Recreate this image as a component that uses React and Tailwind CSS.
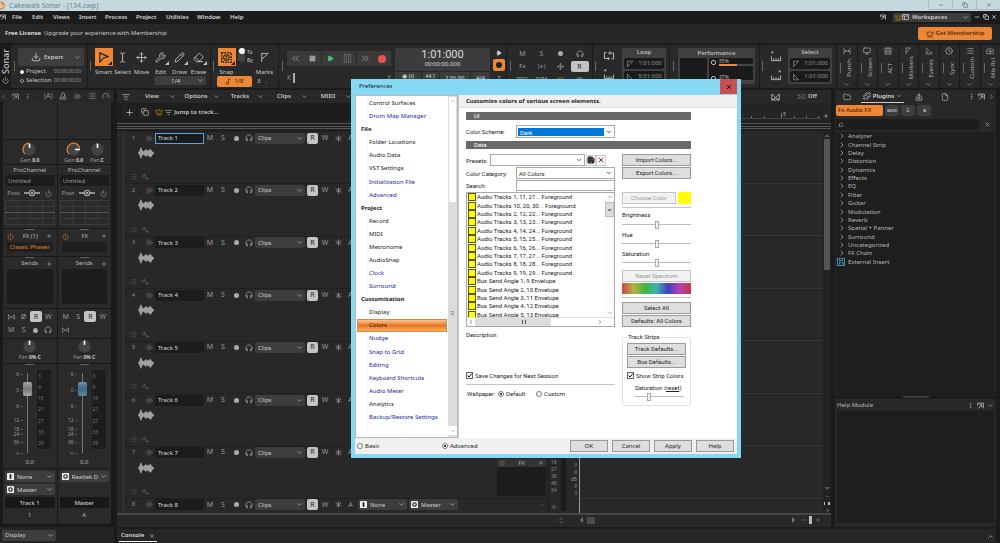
import React from 'react';
import {
  Camera, ChevronDown, ChevronLeft, ChevronRight, ChevronUp, ChevronsLeft, ChevronsRight,
  Clock, Copy, Crown, Download, Eraser, EllipsisVertical, File, Folder, Gauge, List, ListFilter,
  Minus, Monitor, Move, Music2, Pause, Pencil, Play, Plus, Power, Puzzle, Save,
  Search, Square, TextCursor, Wrench, X,
} from 'lucide-react';

const menus = [
  ['File', 'w-[20px]'], ['Edit', 'w-[21px]'], ['Views', 'w-[26px]'], ['Insert', 'w-[26px]'], ['Process', 'w-[31px]'],
  ['Project', 'w-[30px]'], ['Utilities', 'w-[31px]'], ['Window', 'w-[33px]'], ['Help', 'w-[20px]'],
];

const plugins = [
  'Analyzer', 'Channel Strip', 'Delay', 'Distortion', 'Dynamics', 'Effects', 'EQ', 'Filter', 'Guitar',
  'Modulation', 'Reverb', 'Spatial + Panner', 'Surround', 'Uncategorized', 'FX Chain',
];

const prefs = [
  { name: 'Control Surfaces' }, { name: 'Drum Map Manager', blue: true },
  { name: 'File', head: true }, { name: 'Folder Locations' }, { name: 'Audio Data' }, { name: 'VST Settings' },
  { name: 'Initialization File', blue: true }, { name: 'Advanced', blue: true },
  { name: 'Project', head: true }, { name: 'Record' }, { name: 'MIDI' }, { name: 'Metronome' }, { name: 'AudioSnap' },
  { name: 'Clock', blue: true }, { name: 'Surround', blue: true },
  { name: 'Customization', head: true }, { name: 'Display' }, { name: 'Colors', active: true },
  { name: 'Nudge', blue: true }, { name: 'Snap to Grid', blue: true }, { name: 'Editing', blue: true },
  { name: 'Keyboard Shortcuts', blue: true }, { name: 'Audio Meter', blue: true }, { name: 'Analytics' },
  { name: 'Backup/Restore Settings', blue: true },
];

const colorRows = [
  'Audio Tracks 1, 11, 21... Foreground', 'Audio Tracks 10, 20, 30... Foreground',
  'Audio Tracks 2, 12, 22... Foreground', 'Audio Tracks 3, 13, 23... Foreground',
  'Audio Tracks 4, 14, 24... Foreground', 'Audio Tracks 5, 15, 25... Foreground',
  'Audio Tracks 6, 16, 26... Foreground', 'Audio Tracks 7, 17, 27... Foreground',
  'Audio Tracks 8, 18, 28... Foreground', 'Audio Tracks 9, 19, 29... Foreground',
  'Bus Send Angle 1, 9 Envelope', 'Bus Send Angle 2, 10 Envelope', 'Bus Send Angle 3, 11 Envelope',
  'Bus Send Angle 4, 12 Envelope', 'Bus Send Angle 5, 13 Envelope',
];

/* ---------- icons ---------- */

const IoIcon = ({ kind }) => (
  <svg viewBox="0 0 12 12" className="ml-[2px] h-[7px] w-[7px] shrink-0">
    <rect width="12" height="12" rx="1" fill="#eee" />
    {kind === 'in' ? <rect x="4.5" y="2" width="3" height="8" fill="#222" /> : <circle cx="6" cy="6" r="3" fill="none" stroke="#222" strokeWidth="2" />}
  </svg>
);

const DockIcon = ({ size = 7, className = '' }) => (
  <svg width={size} height={size} viewBox="0 0 12 12" className={className} fill="none" stroke="currentColor" strokeWidth="1.5">
    <path d="M1 2h10v9M4 5h4v4M8 5 2 11M1 2v4" />
  </svg>
);

const PanelIcon = () => (
  <svg viewBox="0 0 14 12" className="h-[6px] w-[7px]" fill="none" stroke="#ccc" strokeWidth="1.5">
    <path d="M1 1h12v10H1ZM1 4h12M5 4v7" />
  </svg>
);

const Phones = () => (
  <svg viewBox="0 0 14 14" className="h-[8px] w-[8px]" fill="none" stroke="#a6a6a6" strokeWidth="1.3">
    <path d="M4 12.5C1 10 1 6 2.5 4a5.5 5.5 0 0 1 9 0C13 6 13 10 10 12.5V8h2M4 12.5V8H2" />
  </svg>
);

const MetronomeIcon = () => (
  <svg viewBox="0 0 14 14" className="ml-[6px] h-[8px] w-[8px]" fill="none" stroke="currentColor" strokeWidth="1.3">
    <path d="M5.5 1.5h3L12.5 12.5h-11ZM7 10 11 4M3 9.5h8" />
  </svg>
);

const InputIcon = () => (
  <svg viewBox="0 0 14 14" className="h-[7px] w-[7px]" fill="none" stroke="currentColor">
    <path d="M1.5 3v8M4.5 1v12M7.5 1v12M9.5 4 13 7 9.5 10Z" />
  </svg>
);

const CrossIcon = () => (
  <svg viewBox="0 0 14 12" className="h-[6px] w-[7px]" fill="none" stroke="currentColor" strokeWidth="1.3">
    <path d="M1 1v10M13 1v10M1 2l12 8M1 10 13 2" />
  </svg>
);

const StarIcon = () => (
  <svg viewBox="0 0 12 12" className="h-[7px] w-[7px]" fill="none" stroke="currentColor" strokeWidth="1.3">
    <path d="M6 .5v11M1 3l10 6M11 3 1 9" />
  </svg>
);

const SmartIcon = ({ size }) => (
  <svg width={size} height={size} viewBox="0 0 12 12" fill="none" stroke="currentColor" strokeWidth="1.3">
    <path d="M2 1 11 5 6 6.5 2 11Z" />
  </svg>
);

const SnapIcon = ({ size }) => (
  <svg width={size} height={size} viewBox="0 0 14 14" fill="none" stroke="currentColor">
    <rect x="1" y="1" width="12" height="12" strokeWidth="2" strokeDasharray="2 1.3" />
    <circle cx="7" cy="7" r="3.6" strokeWidth="1.3" />
    <path d="M8.5 5.5H6.5Q5.5 6.5 7 7T7.5 8.5H5.5" />
  </svg>
);

const LoopIcon = () => (
  <svg viewBox="0 0 14 12" className="h-[10px] w-[12px]" fill="none" stroke="#bbb" strokeWidth="1.2">
    <path d="M4 2H1.5v7H7M10 9.5h2.500V2.500H7M8.500 .5 6.500 2.500l2 2M5.500 7.500l2 1.500-2 2" />
  </svg>
);

const FlagIcon = ({ flip }) => (
  <svg viewBox="0 0 10 10" className={`h-[8px] w-[8px] shrink-0 ${flip ? '-scale-y-100' : ''}`} fill="none" stroke="#888">
    <path d="M2 9V1.5h6.500L2 8" />
  </svg>
);

const RangeIcon = ({ right }) => (
  <svg viewBox="0 0 12 12" className={`h-[11px] w-[12px] ${right ? '-scale-x-100' : ''}`} fill="none" stroke="#bbb">
    <path d="M1 6v4.500h10V6M3.500 8v2M6 8v2M8.500 8v2" />
    <path d="M1 1.500h2" strokeWidth="2" />
  </svg>
);

const PunchIcon = ({ size }) => (
  <svg width={size} height={size} viewBox="0 0 12 12" fill="none" stroke="currentColor">
    <path d="M1.500 1v10M10.500 1v10M3 6h6M4.500 4.500 3 6l1.500 1.500M7.500 4.500 9 6 7.500 7.500" />
  </svg>
);

const MarkIcon = ({ size }) => (
  <svg width={size} height={size} viewBox="0 0 12 12" fill="none" stroke="currentColor">
    <path d="M3 11V1.500h7L3 8" />
  </svg>
);

const ActIcon = ({ size }) => (
  <svg width={size} height={size} viewBox="0 0 12 12" fill="none" stroke="currentColor">
    <path d="M1.500 1.500h9v9h-9ZM1.500 7.500h9M4.500 1.500v6M7.500 1.500v6" />
  </svg>
);

const EventsIcon = ({ size }) => (
  <svg width={size} height={size} viewBox="0 0 12 12" fill="none" stroke="currentColor">
    <path d="M1 2h3M1 5h5M1 8h4M7 8h4M1 10.500h10" />
  </svg>
);

/* ---------- shared controls ---------- */

const Drop = ({ value, label, className = '', icon }) => (
  <div className={`relative flex items-center rounded-xs bg-[#3d3d3d] text-[#d0d0d0] ${className}`}>
    {icon && <IoIcon kind={icon} />}
    <select aria-label={label} className="min-w-0 flex-1 appearance-none bg-transparent px-[3px] leading-[10px] outline-none">
      <option>{value}</option>
    </select>
    <ChevronDown size={7} className="pointer-events-none absolute right-[2px]" />
  </div>
);

const TextBtn = ({ label, on, className = 'w-[12px]' }) => (
  <button className={`flex h-[11px] shrink-0 items-center justify-center text-[7px] ${on ? 'rounded-xs bg-[#c4c4c4] text-[#2a2a2a]' : 'text-[#999]'} ${className}`}>
    {label}
  </button>
);

const Dot = () => <span className="h-[5px] w-[5px] rounded-full bg-[#aaa]" />;

/* ---------- top bars and toolbar ---------- */

const Module = ({ children, className = '' }) => (
  <section className={`flex shrink-0 rounded-xs bg-[#292929] ${className}`}>{children}</section>
);

const Grip = () => <span className="mt-[16px] h-[10px] w-px shrink-0 bg-[#666]" />;

const Tool = ({ icon: Icon, label, active, corner }) => (
  <button className="flex w-[19px] flex-col items-center gap-[2px]">
    <span className={`relative flex h-[18px] w-[18px] items-center justify-center ${active ? 'bg-[#ee8735] text-[#222]' : 'text-[#c0c0c0]'}`}>
      <Icon size={11} strokeWidth={2} />
      {corner && <i className="absolute right-px bottom-px border-2 border-transparent border-r-current border-b-current" />}
    </span>
    <span className="text-[6px] leading-[8px] text-[#c8c8c8]">{label}</span>
  </button>
);

const TimeField = ({ value, label, flip }) => (
  <label className="flex h-[11px] items-center rounded-xs bg-[#1a1a1a] px-[2px]">
    <FlagIcon flip={flip} />
    <input aria-label={label} defaultValue={value} className="w-full min-w-0 bg-transparent text-right text-[6px] leading-[9px] text-[#999] outline-none" />
  </label>
);

const TimePanel = ({ title, values }) => (
  <div className="mt-[3px] flex h-[36px] w-[44px] flex-col gap-[2px] rounded-xs bg-[#404040] px-[2px]">
    <h3 className="text-center text-[6px] leading-[8px] font-semibold text-[#bbb]">{title}</h3>
    <TimeField value={values[0]} label={`${title} from`} />
    <TimeField value={values[1]} label={`${title} to`} flip />
  </div>
);

const SideModule = ({ icon: Icon, label }) => (
  <section className="flex min-w-0 flex-1 flex-col items-center rounded-xs bg-[#292929] pt-[2px] text-[#b0b0b0]">
    <Icon size={8} />
    <div className="flex h-[26px] items-center gap-[4px]">
      <span className="h-[10px] w-px bg-[#666]" />
      <span className="rotate-180 text-[6px] leading-[8px] [writing-mode:vertical-rl]">{label}</span>
    </div>
    <ChevronDown size={7} />
  </section>
);

const TopBars = () => (
  <>
    <header className="flex h-[11px] shrink-0 items-center bg-[#c6d9de] text-[7px] text-[#71838a]">
      <svg viewBox="0 0 8 10" className="h-[9px] w-[7px]" fill="none" stroke="#e8852f" strokeWidth="1.5">
        <path d="M0 1.5a3.7 3.7 0 1 1 0 7M1 5l3-3" />
      </svg>
      <h1 className="flex-1 pl-[2px] leading-[11px]">Cakewalk Sonar - [134.cwp]</h1>
      {[Minus, Copy, X].map((Icon, i) => (
        <button key={i} aria-label={['Minimize', 'Restore', 'Close'][i]} className="flex h-[9px] w-[24px] items-center justify-center border border-t-0 border-r-0 border-[#a9bbc0] text-[#6c7d83]">
          <Icon size={6} strokeWidth={3} />
        </button>
      ))}
    </header>
    <nav className="flex h-[12px] shrink-0 items-center bg-[#1b1b1b] text-[6px] font-semibold text-[#d6d6d6]">
      <DockIcon size={6} className="mr-[6px]" />
      {menus.map(([name, width]) => (
        <button key={name} className={`h-[9px] shrink-0 text-left leading-[9px] ${width}`}>{name}</button>
      ))}
      <span className="flex-1" />
      <DockIcon size={6} />
      <div className="ml-[7px] flex h-[9px] w-[78px] items-center bg-[#3a3a3a] pl-[2px]">
        <Crown size={7} color="#b98512" />
        <PanelIcon />
        <Drop value="Workspaces" label="Workspaces" className="h-[9px] flex-1" />
      </div>
      <div className="flex w-[29px] items-center justify-between px-[3px]">
        <Minus size={6} strokeWidth={3} /><Copy size={6} strokeWidth={3} /><X size={6} strokeWidth={3} />
      </div>
    </nav>
    <div className="mt-px flex h-[19px] shrink-0 items-center bg-[#272727] pr-[8px] pl-[5px] text-[6px] text-[#c9c9c9]">
      <b className="mr-[3px] font-semibold text-[#eee]">Free License</b>
      <p className="flex-1">Upgrade your experience with Membership</p>
      <button className="flex h-[13px] w-[74px] items-center justify-center gap-[2px] rounded-xs bg-[#ee8735] font-semibold text-[#5b2c0a]">
        <Crown size={8} /> Get Membership
      </button>
    </div>
  </>
);

const Toolbar = () => (
  <div className="mt-[2px] flex h-[43px] shrink-0 gap-px text-[#c8c8c8]">
    <div className="flex w-[10px] shrink-0 flex-col items-center justify-center gap-[2px]">
      <b className="rotate-180 text-[9px] leading-[9px] font-medium [writing-mode:vertical-rl]">Sonar</b>
      <Power size={7} />
    </div>

    <Module className="w-[76px] px-[3px]">
      <Grip />
      <div className="ml-[3px] w-[66px] pt-[3px]">
        <button className="flex h-[18px] w-full items-center rounded-xs bg-[#3d3d3d] px-[3px] pl-[13px] text-[6px] font-semibold">
          <Download size={10} /> <span className="flex-1 pl-[3px] text-left">Export</span> <ChevronDown size={7} />
        </button>
        <div className="mt-px flex flex-col text-[6px] leading-[9px]">
          {[['Project', true], ['Selection', false]].map(([name, on]) => (
            <label key={name} className="flex items-center">
              <input type="radio" name="export" defaultChecked={on} className="mx-[2px] h-[4px] w-[4px] appearance-none rounded-full border border-[#999] checked:border-white checked:bg-white" />
              <span className="flex-1">{name}</span>
              <span className="pr-[3px] text-[5px] text-[#999]">00:00:00:00</span>
            </label>
          ))}
        </div>
      </div>
    </Module>

    <Module className="w-[122px] pl-[2px]">
      <Grip />
      <div className="relative ml-[3px] pt-[3px]">
        <div className="flex">
          <Tool icon={SmartIcon} label="Smart" active corner />
          <Tool icon={TextCursor} label="Select" />
          <Tool icon={Move} label="Move" />
          <Tool icon={Wrench} label="Edit" corner />
          <Tool icon={Pencil} label="Draw" corner />
          <Tool icon={Eraser} label="Erase" corner />
        </div>
        <Drop value="1/4" label="Draw resolution" className="ml-[60px] h-[9px] w-[52px] pl-[14px] text-[6px]" />
      </div>
    </Module>

    <Module className="w-[67px] pl-[2px]">
      <Grip />
      <div className="ml-[3px] pt-[3px]">
        <div className="flex">
          <Tool icon={SnapIcon} label="Snap" active corner />
          <button role="switch" aria-checked="true" aria-label="Snap to" className="ml-[2px] h-[14px] w-[7px] rounded-full bg-[#444] pb-[8px]">
            <span className="mx-auto block h-[6px] w-[6px] rounded-full bg-white" />
          </button>
          <div className="ml-[2px] flex w-[8px] flex-col text-[5px] leading-[8px]"><span>To</span><span>By</span></div>
          <Tool icon={MarkIcon} label="Marks" />
        </div>
        <div className="flex items-center gap-[5px] text-[6px]">
          <button className="flex h-[11px] w-[35px] items-center justify-center gap-[2px] rounded-xs bg-[#ee8735] text-[#3a1e08]">
            <Music2 size={7} /> 1/8
          </button>
          <span className="leading-[9px]">3</span><span className="leading-[9px]">.</span>
        </div>
      </div>
    </Module>

    <Module className="w-[227px] pl-[3px]">
      <Grip />
      <div className="ml-[4px] w-[104px] pt-[6px]">
        <div className="flex h-[15px] justify-between">
          {[ChevronsLeft, Square, Play, Pause, ChevronsRight].map((Icon, i) => (
            <button key={i} aria-label={['Rewind', 'Stop', 'Play', 'Pause', 'Forward'][i]} className={`flex w-[17px] items-center justify-center bg-[#3a3a3a] ${i === 2 ? 'text-[#4cc777]' : 'text-[#999]'}`}>
              <Icon size={i === 1 || i === 2 ? 7 : 11} strokeWidth={i === 3 ? 1 : 2} fill={i === 1 || i === 2 ? 'currentColor' : 'none'} />
            </button>
          ))}
          <button aria-label="Record" className="flex w-[17px] items-center justify-center bg-[#3a3a3a]">
            <span className="h-[8px] w-[8px] rounded-full bg-[#ef5350]" />
          </button>
        </div>
        <div className="mt-[7px] flex items-center gap-[2px] text-[#888]">
          <span className="text-[7px] leading-[8px]">K</span>
          <input type="range" aria-label="Position" defaultValue="0" className="h-[10px] min-w-0 flex-1 appearance-none bg-linear-to-b from-transparent from-45% via-[#666] via-50% to-transparent to-55% [&::-webkit-slider-thumb]:h-[10px] [&::-webkit-slider-thumb]:w-[2px] [&::-webkit-slider-thumb]:appearance-none [&::-webkit-slider-thumb]:bg-[#aaa]" />
          <span className="text-[7px] leading-[8px]">X</span>
        </div>
      </div>
      <div className="mt-[3px] ml-[4px] w-[95px] overflow-hidden rounded-xs bg-[#3c3c3c] text-center text-[#ddd]">
        <div className="font-['Roboto'] text-[11px] leading-[13px]">1:01:000</div>
        <div className="text-[6px] leading-[7px]">00:00:00.000</div>
        <div className="mt-[3px] flex h-[17px] gap-px bg-[#292929] pt-px text-[6px] leading-[8px] [&>span]:bg-[#3c3c3c]">
          <span className="w-[26px]">◉ (i)</span><span className="w-[17px] text-[5px]">44.1</span><span className="flex-1 pt-[2px]">120.00</span><span className="w-[19px] pt-[2px]">4/4</span>
        </div>
      </div>
      <div className="ml-[3px] flex w-[12px] flex-col items-center gap-[3px] pt-[5px]">
        <Play size={6} fill="#ccc" />
        <button aria-label="Audio engine" className="flex h-[12px] w-[12px] items-center justify-center rounded-xs bg-[#ee8735]">
          <span className="h-[6px] w-[6px] rounded-full bg-[#222]" />
        </button>
        <span className="text-[6px]">?</span>
      </div>
    </Module>

    <Module className="w-[85px] pl-[3px]">
      <Grip />
      <div className="ml-[2px] grid h-[40px] w-[76px] grid-cols-4 items-center justify-items-center pt-[2px] text-[6px] leading-[9px] text-[#aaa]">
        <TextBtn label="M" /><TextBtn label="S" /><Dot /><Phones />
        <span>Fx</span><span>|s|</span><Move size={7} /><TextBtn label="R" on className="w-[18px]" />
        <span>PDC</span><span>DIM</span><Crown size={7} color="#b98512" /><span>W</span>
      </div>
    </Module>

    <Module className="w-[76px] pl-[2px]">
      <Grip />
      <div className="flex w-[26px] flex-col items-center gap-[8px] pt-[6px]">
        <LoopIcon /><RangeIcon />
      </div>
      <TimePanel title="Loop" values={['1:01:000', '5:01:000']} />
    </Module>

    <Module className="w-[89px] pl-[3px]">
      <Grip />
      <div className="mt-[3px] ml-[4px] h-[36px] w-[77px] rounded-xs bg-[#404040] px-[2px] text-[6px] text-[#bbb]">
        <h3 className="text-center leading-[10px] font-semibold">Performance</h3>
        <div className="flex h-[24px] gap-[2px]">
          <span className="w-[27px] bg-[#1a1a1a]" />
          <div className="flex flex-1 flex-col justify-between bg-[#1a1a1a] pl-[2px] text-[5px] leading-[6px]">
            {[['55%', 'w-[18px]'], ['37%', 'w-[12px]']].map(([n, w]) => (
              <div key={n} className="flex items-center gap-[3px]">
                <i className="h-[5px] w-[5px] rounded-xs border border-[#bbb]" />
                <div className="flex-1">{n}<span className="block h-[2px] bg-[#444]"><i className={`block h-[2px] bg-[#ee8735] ${w}`} /></span></div>
              </div>
            ))}
          </div>
        </div>
      </div>
    </Module>

    <Module className="w-[76px] pl-[2px]">
      <Grip />
      <div className="flex w-[25px] flex-col items-center gap-[8px] pt-[6px]">
        <RangeIcon /><RangeIcon right />
      </div>
      <TimePanel title="Select" values={['1:01:000', '1:01:000']} />
    </Module>

    <div className="flex flex-1 gap-px">
      <SideModule icon={PunchIcon} label="Punch" />
      <SideModule icon={Monitor} label="Screen" />
      <SideModule icon={ActIcon} label="ACT" />
      <SideModule icon={MarkIcon} label="Markers" />
      <SideModule icon={EventsIcon} label="Events" />
      <SideModule icon={Clock} label="Sync" />
      <SideModule icon={List} label="Custom" />
      <SideModule icon={Camera} label="Mix Rcl" />
    </div>
  </div>
);

/* ---------- channel strips ---------- */

const Knob = ({ name, value, arc, side }) => (
  <div className="flex flex-col items-center">
    <svg viewBox="0 0 28 28" className="h-[15px] w-[15px]" fill="none">
      <circle cx="14" cy="14" r="11.5" fill="#444" />
      {arc && <path d={side ? 'M6 23A12 12 0 1 1 26 12' : 'M6 23A12 12 0 0 1 14 2'} stroke="#e07f35" strokeWidth="2.5" />}
      <path d={side ? 'M17 14h9' : 'M14 11V3'} stroke="#fff" strokeWidth="3" />
    </svg>
    <span className="text-[5px] leading-[6px] whitespace-nowrap text-[#999]">{name} <b className="text-[#ccc]">{value}</b></span>
  </div>
);

const meter = ['3', '9', '15', '21', '27', '33', '39'];
const scale = [['6', 'h-[16px]'], ['0', 'h-[16px]'], ['6', 'h-[14px]'], ['12', 'h-[9px]'], ['18', 'h-[5px]'], ['24', 'h-[8px]'], ['36', 'h-[11px]'], ['∞', 'h-[5px]']];

const Strip = ({ master }) => (
  <section className="flex min-w-0 flex-1 flex-col gap-px text-[6px] text-[#b8b8b8] [&>*]:shrink-0 [&>*]:bg-[#2a2a2a]">
    <div className="h-[37px]" />
    <div className="flex h-[24px] items-center justify-evenly">
      <Knob name="Gain" value="0.0" arc side={master} />
      {master && <Knob name="Pan" value="C" />}
    </div>
    <div className="flex h-[63px] flex-col px-[2px]">
      <h3 className="text-center leading-[10px]">ProChannel</h3>
      <input aria-label="ProChannel preset" defaultValue="Untitled" className="h-[11px] w-full bg-[#1c1c1c] px-[3px] text-[#999] outline-none" />
      <div className="flex h-[14px] items-center justify-around text-[#999]">
        Post
        <svg viewBox="0 0 30 14" className="h-[8px] w-[16px]" fill="none" stroke="#aaa" strokeWidth="3">
          <path d="M0 7h30" /><circle cx="15" cy="7" r="5" fill="#2a2a2a" strokeWidth="2" /><circle cx="15" cy="7" r="1" />
        </svg>
        <Power size={7} />
      </div>
      <svg viewBox="0 0 48 25" className="h-[25px] w-full" preserveAspectRatio="none" fill="none" stroke="#3b3b3b">
        <rect x=".5" y=".5" width="47" height="24" /><path d="M12.5 0v25M24.5 0v25M36.5 0v25M0 6.5h48M0 18.5h48" /><path d="M0 12.5h48" stroke="#555" />
      </svg>
    </div>
    <div className="flex h-[27px] flex-col px-[4px]">
      <span className="mx-auto h-px w-[9px] bg-[#666]" />
      <div className="flex h-[12px] items-center justify-between">
        <Power size={7} color="#d97a34" /> {master ? 'FX' : 'FX (1)'} <Plus size={6} />
      </div>
      <button className="h-[10px] rounded-xs bg-[#1f1f1f] text-[#e08438]">{master ? '' : 'Classic Phaser'}</button>
    </div>
    <div className="flex h-[51px] flex-col px-[4px]">
      <span className="mx-auto h-px w-[9px] bg-[#666]" />
      <div className="flex h-[11px] items-center justify-between"><i className="w-[6px]" /> Sends <Plus size={6} /></div>
      <div className="h-[35px] rounded-xs bg-[#1c1c1c]" />
    </div>
    <div className="grid h-[29px] grid-cols-4 items-center justify-items-center px-[2px] py-px">
      {master ? <><TextBtn label="M" /><TextBtn label="S" /></> : <><TextBtn label={<CrossIcon />} /><TextBtn label="Ø" /></>}
      <TextBtn label="R" on /><TextBtn label="W" />
      {master ? <TextBtn label={<CrossIcon />} /> : <><TextBtn label="M" /><TextBtn label="S" /><Dot /><Phones /></>}
    </div>
    <div className="flex h-[24px] items-start justify-center"><Knob name="Pan" value="0% C" /></div>
    <div className="h-[104px]">
      <span className="mx-auto block h-px w-[9px] bg-[#666]" />
      <div className="flex h-[94px] pt-[5px]">
        <div className="w-[20px] pt-px text-right text-[5px] leading-[6px] text-[#999]">
          {scale.map(([n, h], i) => <div key={i} className={h}>{n} –</div>)}
        </div>
        <input type="range" aria-label="Volume" defaultValue="86" className={`mx-[2px] mt-[3px] h-[80px] w-[9px] appearance-none bg-linear-to-r from-transparent from-40% via-[#777] via-50% to-transparent to-60% [direction:rtl] [writing-mode:vertical-lr] [&::-webkit-slider-thumb]:h-[14px] [&::-webkit-slider-thumb]:w-[9px] [&::-webkit-slider-thumb]:appearance-none [&::-webkit-slider-thumb]:rounded-xs [&::-webkit-slider-thumb]:bg-linear-to-b ${master ? '[&::-webkit-slider-thumb]:from-[#6795b5] [&::-webkit-slider-thumb]:via-[#3f6785] [&::-webkit-slider-thumb]:to-[#5a89aa]' : '[&::-webkit-slider-thumb]:from-[#a5a5a5] [&::-webkit-slider-thumb]:via-[#777] [&::-webkit-slider-thumb]:to-[#aaa]'}`} />
        <div className="ml-[5px] flex h-[79px] w-[14px] flex-col justify-around bg-[#1d1d1d] pl-px text-[5px] leading-[6px] text-[#777]">
          {meter.map((n) => <span key={n}>{n}</span>)}
        </div>
      </div>
      <div className="text-center text-[6px] leading-[7px]">0.0</div>
    </div>
    <div className="flex h-[55px] flex-col gap-[2px] px-[2px] pt-[2px] text-center">
      {!master && <Drop value="None" label="Input" icon="in" className="h-[11px]" />}
      <Drop value={master ? 'Realtek D' : 'Master'} label="Output" icon="out" className="h-[11px]" />
      {master && <div className="h-[11px]" />}
      <input aria-label="Strip name" defaultValue={master ? 'Master' : 'Track 1'} className="h-[11px] w-full shrink-0 bg-[#181818] text-center text-[#ddd] outline-none" />
      <span className="h-[11px] leading-[10px]">{master ? 'A' : '1'}</span>
    </div>
  </section>
);

const Inspector = () => (
  <aside className="flex w-[114px] shrink-0 flex-col bg-[#222] text-[#999]">
    <div className="flex h-[12px] shrink-0 items-center bg-[#282828] [&>svg]:shrink-0">
      <ChevronLeft size={7} /><DockIcon className="ml-[5px]" /><EllipsisVertical size={7} className="ml-[5px]" />
      <span className="ml-[13px] text-[7px]">(A)</span><MetronomeIcon />
      <span className="mr-[7px] ml-[7px]"><InputIcon /></span><List size={8} /><Gauge size={8} className="ml-[6px]" />
    </div>
    <div className="flex flex-1 gap-px bg-[#191919] pr-[3px] pl-[3px]"><Strip /><Strip master /></div>
    <div className="flex h-[16px] shrink-0 items-center bg-[#242424] pl-[2px] text-[6px]">
      <Drop value="Display" label="Display" className="h-[11px] w-[54px]" />
    </div>
  </aside>
);

/* ---------- track view ---------- */

const Track = ({ n, last }) => (
  <li className={`relative flex flex-col border-t border-[#202020] ${last ? 'h-[15px] shrink-0' : 'min-h-0 flex-1'}`}>
    <div className="flex h-[12px] shrink-0 items-center text-[6px]">
      <span className="w-[17px] text-center text-[#888]">{n}</span>
      <span className="flex w-[13px] justify-end pr-[2px] text-[#777]"><InputIcon /></span>
      <input aria-label={`Track ${n} name`} defaultValue={`Track ${n}`} className={`h-[11px] w-[49px] text-[#ddd] outline-none ${n === 1 ? 'border border-[#5aa0e6] bg-[#1b1b1b] px-[2px]' : 'bg-[#1c1c1c] px-[3px]'}`} />
      <TextBtn label="M" /><TextBtn label="S" className="w-[14px]" />
      <span className="flex w-[12px] justify-center"><Dot /></span>
      <span className="flex w-[13px] justify-center"><Phones /></span>
      <Drop value="Clips" label={`Track ${n} edit filter`} className="mr-[2px] h-[11px] w-[50px]" />
      <TextBtn label="R" on className="w-[11px]" /><TextBtn label="W" className="w-[14px]" /><TextBtn label={<StarIcon />} /><TextBtn label="A" className="w-[13px]" />
      <Drop value="None" label={`Track ${n} input`} icon="in" className="ml-px h-[11px] w-[49px]" />
      <Drop value="Master" label={`Track ${n} output`} icon="out" className="ml-[2px] h-[11px] w-[49px]" />
      <span className="flex-1" />
      <ChevronUp size={6} color="#777" className="mr-[3px]" />
    </div>
    {!last && (
      <>
        <svg viewBox="0 0 32 24" className="mt-[3px] ml-[13px] h-[12px] w-[16px]" fill="#a0a0a0">
          <path d="M0 11 2 10 4 4 6 0 8 5 10 9 13 7 16 4 18 8 20 5 22 7 25 3 27 7 29 9 32 11V13L29 16 27 19 25 22 22 18 20 19 18 16 16 20 13 17 10 15 8 19 6 24 4 20 2 14 0 13Z" />
        </svg>
        <div className="mt-auto mb-[3px] flex gap-[5px] pl-[5px] text-[#555]">
          <List size={7} />
          <svg viewBox="0 0 12 12" className="h-[7px] w-[7px]" fill="none" stroke="#777" strokeWidth="1.3"><path d="M0 8Q4-2 6 6T12 8" /></svg>
        </div>
      </>
    )}
    {n === 7 && (
      <div className="absolute top-[12px] right-[2px] bottom-[2px] w-[49px] bg-[#1c1c1c] text-[6px]">
        <div className="flex h-[8px] items-center justify-between bg-[#333] px-[2px] leading-[8px] text-[#aaa]">
          <Power size={6} color="#d97a34" /> FX <Plus size={6} />
        </div>
      </div>
    )}
  </li>
);

const TrackView = () => (
  <main className="flex min-w-0 flex-1 flex-col bg-[#282828] text-[6px] text-[#c8c8c8]">
    <div className="flex h-[13px] shrink-0 items-center pr-[3px] font-semibold">
      <ListFilter size={8} className="ml-[5px]" />
      <span className="w-[9px]" />
      {['View', 'Options', 'Tracks', 'Clips', 'MIDI'].map((name) => (
        <button key={name} className="flex w-[44px] items-center">
          <span className="w-[26px] text-center">{name}</span><ChevronDown size={7} className="ml-[4px]" />
        </button>
      ))}
      <span className="flex-1" />
      <svg viewBox="0 0 12 10" className="h-[8px] w-[9px]" fill="none" stroke="#ccc"><path d="M1 9V1l5 5 5-5v8ZM6 6 1 9M6 6l5 3" /></svg>
      <svg viewBox="0 0 14 10" className="mr-[2px] ml-[17px] h-[7px] w-[9px]" fill="none" stroke="#bbb"><path d="M1 1l4 4-4 4M13 1 9 5l4 4M7 1v2M7 7v2" /></svg>
      Off
      <span className="w-[11px]" />
    </div>
    <div className="flex h-[18px] shrink-0 bg-[#1d1d1d]">
      <div className="flex w-[464px] items-center gap-[2px]">
        <button aria-label="Add track" className="ml-[5px] flex h-[14px] w-[14px] items-center justify-center bg-[#222]"><Plus size={9} /></button>
        <button aria-label="Duplicate track" className="flex h-[14px] w-[14px] items-center justify-center bg-[#222]"><Copy size={8} /></button>
        <Crown size={8} color="#b98512" className="ml-px" /><ListFilter size={7} />
        <input aria-label="Jump to track" defaultValue="Jump to track..." className="w-[80px] bg-transparent font-semibold outline-none" />
      </div>
      <div className="flex flex-1 items-end justify-end bg-[#242424]">
        <svg className="h-[14px] w-[240px]" viewBox="0 0 240 14" fill="none" stroke="#777">
          <path d="M0 11.5h240" stroke="#444" />
          <path d="M12.5 9v2M24.5 9v2M36.5 9v2M48.5 9v2M60.5 9v2M72.5 9v2M84.5 9v2M97.5 5v6M109.5 9v2M121.5 9v2M133.5 9v2M146.5 9v2M158.5 9v2M170.5 9v2M183.5 9v2M200.5 6v5M213.500 9v2M225.500 9v2M237.500 9v2" />
          <text x="202" y="9" fill="#bbb" stroke="none" fontSize="5">5</text>
        </svg>
        <span className="mb-[2px] flex w-[10px] justify-center"><Plus size={6} /></span>
      </div>
    </div>
    <div className="flex h-[10px] shrink-0 flex-col justify-evenly bg-[#202020] [&>i]:h-px [&>i]:bg-[#555]"><i /><i /><i /></div>
    <div className="flex min-h-0 flex-1">
      <ul className="ml-[6px] flex w-[425px] flex-col border-l border-[#383838] pl-px">
        {[1, 2, 3, 4, 5, 6, 7, 8].map((n) => <Track key={n} n={n} last={n === 8} />)}
      </ul>
      <div className="flex w-[31px] items-end justify-between border-l border-[#1b1b1b] px-[2px] pb-[2px] text-[5px] leading-[7px] text-[#888]">
        <div className="flex flex-col"><span>18</span><span>27</span><span>36</span><span>48</span><span>54</span><span className="mt-[10px]">-6</span></div>
        <span className="h-full w-[5px] bg-[#1b1b1b]" />
        <div className="flex flex-col pb-[14px] text-right"><span>3</span><span>9</span><span>dB</span><span>9</span><span>3</span></div>
      </div>
      <div className="flex flex-1 flex-col border-l border-[#999]">
        {[1, 2, 3, 4, 5, 6, 7].map((n) => <div key={n} className="flex-1 border-b border-[#363636]" />)}
        <div className="h-[14px] shrink-0" />
      </div>
      <div className="flex w-[8px] flex-col items-center bg-[#222] pt-[3px] text-[#888]">
        <i className="border-3 border-t-0 border-transparent border-b-[#555]" />
        <span className="mt-[2px] h-[131px] w-[6px] bg-[#555]" />
        <i className="mt-auto mb-[4px] border-3 border-b-0 border-transparent border-t-[#555]" />
        <Minus size={5} />
        <span className="my-[3px] h-[3px] w-[6px] border-l border-r-2 border-[#bbb]" />
        <Plus size={5} />
      </div>
    </div>
    <div className="mb-[2px] flex h-[12px] shrink-0 items-center border-t-2 border-[#484848] text-[#888]">
      <span className="w-[441px]" />
      <svg viewBox="0 0 8 12" className="h-[7px] w-[6px]" fill="none" stroke="currentColor"><path d="M1 4.500 4 1.500l3 3M1 7.500l3 3 3-3" /></svg>
      <span className="w-[16px]" />
      <i className="border-3 border-l-0 border-transparent border-r-[#777]" />
      <span className="ml-[4px] h-[7px] w-[8px] bg-[#4c4c4c]" />
      <span className="flex-1" />
      <i className="border-3 border-r-0 border-transparent border-l-[#777]" />
      <Minus size={6} className="ml-[5px]" /><span className="mx-[3px] h-[8px] w-[3px] bg-[#bbb]" /><Plus size={6} className="mr-[10px]" />
    </div>
  </main>
);

/* ---------- browser ---------- */

const Browser = () => (
  <aside className="mr-[4px] ml-[4px] flex w-[161px] shrink-0 flex-col bg-[#282828] text-[6px] text-[#b8b8b8]">
    <div className="flex h-[13px] items-center">
      <Folder size={8} className="ml-[8px]" />
      <button className="mr-[11px] ml-[10px] flex h-full w-[43px] items-center justify-between border-b border-[#ccc] px-[2px] font-semibold text-[#ddd]">
        <Puzzle size={8} /> Plugins <ChevronDown size={6} />
      </button>
      <svg viewBox="0 0 14 14" className="h-[8px] w-[8px]" fill="none" stroke="currentColor" strokeWidth="1.3"><path d="M5 5 7 1l2 4M2 12.500Q1 5 7 5t5 7.500Z" /><circle cx="7" cy="9" r="1.500" /></svg>
      <File size={8} className="ml-[18px]" />
      <span className="flex-1" />
      <EllipsisVertical size={7} /><DockIcon className="mx-[3px]" /><ChevronRight size={7} className="mr-px" />
    </div>
    <div className="mt-[2px] flex h-[11px] gap-[2px] pl-px text-[#bbb]">
      <button className="w-[47px] rounded-xs bg-[#ee8735] px-[2px] text-left leading-[11px] font-medium text-[#3c1e08]">Fx Audio FX</button>
      {['MIDI', '☰', '✖'].map((t) => <button key={t} className="w-[14px] rounded-xs bg-[#3d3d3d] text-[4px] leading-[11px] font-bold">{t}</button>)}
    </div>
    <label className="mt-[3px] flex h-[11px] items-center pr-[5px] pl-px">
      <span className="flex h-full flex-1 items-center bg-[#1d1d1d] pl-[2px]">
        <Search size={6} className="-scale-x-100" />
        <input aria-label="Search plugins" className="w-full bg-transparent outline-none" />
      </span>
      <X size={7} className="ml-[5px]" />
    </label>
    <div className="mx-px mt-[2px] flex-1 bg-[#1e1e1e]">
      <ul className="flex h-[134px] flex-col">
        {plugins.map((name) => (
          <li key={name} className="flex flex-1 items-center gap-[2px] pl-[2px] leading-[8px]"><ChevronRight size={8} strokeWidth={2} /> {name}</li>
        ))}
        <li className="flex flex-1 items-center gap-[3px] pl-px leading-[8px]">
          <svg viewBox="0 0 16 16" className="h-[8px] w-[8px]" fill="none" stroke="#42b6d8" strokeWidth="1.5"><rect x="1" y="1" width="14" height="14" /><path d="M5 3v4M11 3v4M5 5h6M5 13V9h3M10 9l3 4M13 9l-3 4" /></svg>
          External Insert
        </li>
      </ul>
    </div>
    <div className="flex h-[3px] justify-center bg-[#1b1b1b]"><span className="h-[2px] w-[26px] bg-[#3c3c3c]" /></div>
    <div className="flex h-[12px] items-center pr-[2px] pl-[2px]">
      <h2 className="flex-1">Help Module</h2>
      <EllipsisVertical size={7} /><DockIcon className="mx-[3px]" /><ChevronDown size={7} />
    </div>
    <div className="mx-[2px] mb-[4px] h-[112px] bg-[#1e1e1e]" />
  </aside>
);

/* ---------- preferences ---------- */

const WinButton = ({ children, className = '', disabled }) => (
  <button disabled={disabled} className={`h-[12px] shrink-0 border border-[#9a9a9a] bg-[#dedede] text-center leading-[10px] disabled:border-[#c4c4c4] disabled:bg-[#f2f2f2] disabled:text-[#999] ${className}`}>
    {children}
  </button>
);

const WinSelect = ({ value, label, className = '', active }) => (
  <div className={`relative flex h-[12px] items-center border border-[#a9a9a9] bg-white ${className}`}>
    <select aria-label={label} className={`h-[10px] min-w-0 flex-1 appearance-none px-[2px] outline-none ${active ? 'mr-[9px] border border-white bg-[#0078d7] text-white' : ''}`}>
      <option>{value}</option>
    </select>
    <ChevronDown size={6} strokeWidth={3} className="pointer-events-none absolute right-[2px]" />
  </div>
);

const WinSlider = ({ label, value = 50, className = '' }) => (
  <input type="range" aria-label={label} defaultValue={value} className={`block h-[9px] w-full appearance-none bg-linear-to-b from-white from-40% via-[#bbb] via-50% to-white to-60% [&::-webkit-slider-thumb]:h-[8px] [&::-webkit-slider-thumb]:w-[4px] [&::-webkit-slider-thumb]:appearance-none [&::-webkit-slider-thumb]:border [&::-webkit-slider-thumb]:border-[#aaa] [&::-webkit-slider-thumb]:bg-[#f4f4f4] ${className}`} />
);

const Check = ({ children, className = '' }) => (
  <label className={`flex items-center gap-[2px] ${className}`}>
    <span className="relative flex h-[7px] w-[7px]">
      <input type="checkbox" defaultChecked className="h-[7px] w-[7px] appearance-none border border-[#666] bg-white" />
      <svg viewBox="0 0 7 7" className="pointer-events-none absolute inset-0" fill="none" stroke="#000" strokeWidth="1"><path d="M1.5 3.5 3 5l3-3.5" /></svg>
    </span>
    {children}
  </label>
);

const Radio = ({ name, label, checked, className = '' }) => (
  <label className={`flex items-center gap-[2px] ${className}`}>
    <span className="relative flex h-[6px] w-[6px]">
      <input type="radio" name={name} defaultChecked={checked} className="h-[6px] w-[6px] appearance-none rounded-full border border-[#777] bg-white" />
      {checked && <i className="pointer-events-none absolute top-[2px] left-[2px] h-[2px] w-[2px] rounded-full bg-black" />}
    </span>
    {label}
  </label>
);

const PrefTree = () => (
  <nav className="flex w-[103px] shrink-0 border border-[#b8b8bc] bg-white">
    <ul className="flex h-[328px] min-w-0 flex-1 flex-col pt-px">
      {prefs.map(({ name, head, blue, active }) => (
        <li key={name} className={`mx-px flex min-h-0 flex-1 items-center border whitespace-nowrap ${head ? 'pl-[3px] font-bold' : 'pl-[11px]'} ${blue ? 'text-[#1b1ba0]' : ''} ${active ? 'border-[#d08a4c] bg-linear-to-b from-[#fcc58b] via-[#e8741f] to-[#fbb25c]' : 'border-transparent'}`}>
          {name}
        </li>
      ))}
    </ul>
    <div className="flex w-[9px] flex-col items-center justify-between bg-[#dcdcdc]">
      <div className="flex h-[107px] w-full flex-col items-center border border-[#ddd] bg-white pt-px"><ChevronUp size={6} color="#777" /></div>
      <span className="mt-[107px] mb-auto text-[6px] leading-[7px] text-[#555]">≡</span>
      <div className="mb-[2px] flex h-[9px] w-full items-center justify-center bg-white"><ChevronDown size={6} color="#777" /></div>
    </div>
  </nav>
);

const ColorPanel = () => (
  <section className="flex min-w-0 flex-1 flex-col bg-white font-['Roboto']">
    <h3 className="mb-[4px] flex h-[13px] shrink-0 items-center border-b border-[#ddd] bg-[#f0f0f0] pl-[7px] font-['Noto_Sans'] font-bold">
      Customize colors of various screen elements.
    </h3>
    <div className="ml-[7px] w-[225px]">
      <h4 className="h-[8px] bg-[#696969] pl-[8px] leading-[8px] text-white">UI</h4>
      <div className="mt-[5px] flex items-center">
        <span className="w-[50px]">Color Scheme:</span>
        <WinSelect value="Dark" label="Color Scheme" className="h-[13px] w-[99px]" active />
      </div>
      <h4 className="mt-[3px] h-[8px] bg-[#696969] pl-[8px] leading-[8px] text-white">Data</h4>
      <div className="mt-[5px] flex justify-between">
        <div className="flex w-[149px] flex-col">
          <div className="flex items-center">
            <span className="w-[24px]">Presets:</span>
            <WinSelect value="" label="Presets" className="w-[95px]" />
            <button aria-label="Save preset" className="ml-px flex h-[11px] w-[10px] items-center justify-center border border-[#ccc]"><Save size={8} strokeWidth={3} fill="#555" /></button>
            <button aria-label="Delete preset" className="flex h-[11px] w-[10px] items-center justify-center border border-[#ccc]"><X size={8} strokeWidth={3} color="#b01020" /></button>
          </div>
          <div className="mt-px flex items-center">
            <span className="w-[50px]">Color Category:</span>
            <WinSelect value="All Colors" label="Color Category" className="w-[99px]" />
          </div>
          <label className="mt-px flex items-center">
            <span className="w-[50px]">Search:</span>
            <input className="h-[11px] w-[99px] border border-[#a9a9a9]" />
          </label>
          <div className="mt-px flex h-[135px] flex-col border border-[#a9a9a9]">
            <div className="flex h-[124px] justify-between overflow-hidden">
              <ul className="flex h-[126px] flex-col">
                {colorRows.map((row) => (
                  <li key={row} className="flex min-h-0 flex-1 items-center gap-px pl-px leading-[8px] whitespace-nowrap">
                    <i className="h-[8px] w-[8px] border border-[#555500] bg-[#ffff00]" /> {row}
                  </li>
                ))}
              </ul>
              <div className="flex w-[9px] flex-col items-center justify-between bg-[#fafafa] py-px">
                <ChevronUp size={6} color="#777" />
                <span className="mt-[2px] mb-auto flex h-[15px] w-full items-center justify-center border border-[#bbb] bg-[#ddd] leading-[6px]">≡</span>
                <ChevronDown size={6} color="#777" />
              </div>
            </div>
            <div className="flex h-[9px] items-center border-t border-[#ddd]">
              <ChevronLeft size={6} className="mx-px" />
              <span className="flex h-full w-[76px] items-center justify-center bg-[#dcdcdc] pl-[22px]"><i className="h-[4px] w-[4px] border-x border-[#555]" /></span>
              <span className="flex-1" />
              <ChevronRight size={6} className="mr-[11px]" />
            </div>
          </div>
          <p className="mt-[4px] leading-[8px]">Description:</p>
          <Check className="mt-[32px] leading-[9px]">Save Changes for Next Session</Check>
          <hr className="mt-[4px] border-[#c4c4c4]" />
          <div className="mt-[4px] flex items-center pl-px leading-[9px]">
            Wallpaper:
            <Radio name="wall" label="Default" checked className="ml-[3px] w-[38px]" />
            <Radio name="wall" label="Custom" />
          </div>
        </div>

        <div className="flex w-[69px] flex-col">
          <WinButton>Import Colors...</WinButton>
          <WinButton className="mt-px">Export Colors...</WinButton>
          <div className="mt-[13px] flex justify-between border-b border-[#c4c4c4] pb-[3px]">
            <WinButton disabled className="w-[54px]">Choose Color</WinButton>
            <span className="h-[12px] w-[13px] bg-[#ffff00]" />
          </div>
          <span className="mt-[2px] leading-[9px]">Brightness</span>
          <WinSlider label="Brightness" className="mt-px" />
          <span className="mt-px leading-[9px]">Hue</span>
          <WinSlider label="Hue" />
          <span className="mt-px leading-[9px]">Saturation</span>
          <WinSlider label="Saturation" />
          <WinButton disabled className="mt-[3px]">Reset Spectrum</WinButton>
          <span className="mt-px h-[11px] bg-[linear-gradient(90deg,#c44a4a,#b8b040,#40b840,#40b0b0,#4040c0,#b840b8,#c43838)]" />
          <hr className="mt-[3px] border-[#c4c4c4]" />
          <WinButton className="mt-[4px]">Select All</WinButton>
          <WinButton className="mt-px">Defaults: All Colors</WinButton>
          <fieldset className="mt-[6px] flex h-[73px] flex-col rounded-xs border border-[#dfe5e5] px-[4px]">
            <legend className="px-px leading-[8px]">Track Strips</legend>
            <WinButton className="mt-[2px]">Track Defaults...</WinButton>
            <WinButton className="mt-px">Bus Defaults...</WinButton>
            <Check className="mt-[3px] leading-[9px] whitespace-nowrap">Show Strip Colors</Check>
            <span className="mt-[3px] pl-[8px] leading-[9px] whitespace-nowrap">Saturation (<a href="#reset" className="underline">reset</a>)</span>
            <WinSlider label="Strip saturation" value={27} className="ml-[8px] max-w-[49px]" />
          </fieldset>
        </div>
      </div>
    </div>
  </section>
);

const Preferences = () => (
  <div role="dialog" aria-label="Preferences" className="absolute top-[79px] left-[351px] flex h-[379px] w-[390px] flex-col bg-[#86d9f4] px-[4px] pb-[4px] text-[6px] text-[#222]">
    <div className="flex h-[16px] shrink-0 items-start justify-between pl-[4px]">
      <h2 className="leading-[15px]">Preferences</h2>
      <button aria-label="Close" className="flex h-[15px] w-[17px] items-center justify-center bg-[#c75050] text-black"><X size={6} strokeWidth={4} /></button>
    </div>
    <div className="flex h-[343px] shrink-0 gap-px bg-[#c8c8cc]">
      <PrefTree />
      <ColorPanel />
    </div>
    <div className="flex flex-1 items-center bg-[#f0f0f0] pr-[3px] pl-[2px]">
      <Radio name="mode" label="Basic" className="w-[85px]" />
      <Radio name="mode" label="Advanced" checked />
      <span className="flex-1" />
      <div className="flex gap-[4px]">
        {['OK', 'Cancel', 'Apply', 'Help'].map((name) => (
          <WinButton key={name} className={name === 'OK' ? 'w-[38px] border-[#5a9ac8]' : 'w-[38px]'}>{name}</WinButton>
        ))}
      </div>
    </div>
  </div>
);

const App = () => {
  return (
    <div className="relative flex h-screen flex-col overflow-hidden bg-[#1b1b1b] font-['Noto_Sans',sans-serif]">
      <TopBars />
      <Toolbar />
      <div className="mt-[2px] flex min-h-0 flex-1">
        <Inspector />
        <div className="ml-[3px] flex min-w-0 flex-1 flex-col">
          <div className="flex min-h-0 flex-1"><TrackView /><Browser /></div>
          <footer className="mr-[4px] flex h-[16px] shrink-0 items-center justify-between border-t-2 border-[#1b1b1b] bg-[#262626] px-[2px] text-[6px] font-semibold text-[#ddd]">
            <button className="flex h-[12px] items-center gap-[5px] border-b border-white px-[2px]">Console <X size={6} /></button>
            <ChevronUp size={7} />
          </footer>
        </div>
      </div>
      <Preferences />
    </div>
  );
};

export default App;
